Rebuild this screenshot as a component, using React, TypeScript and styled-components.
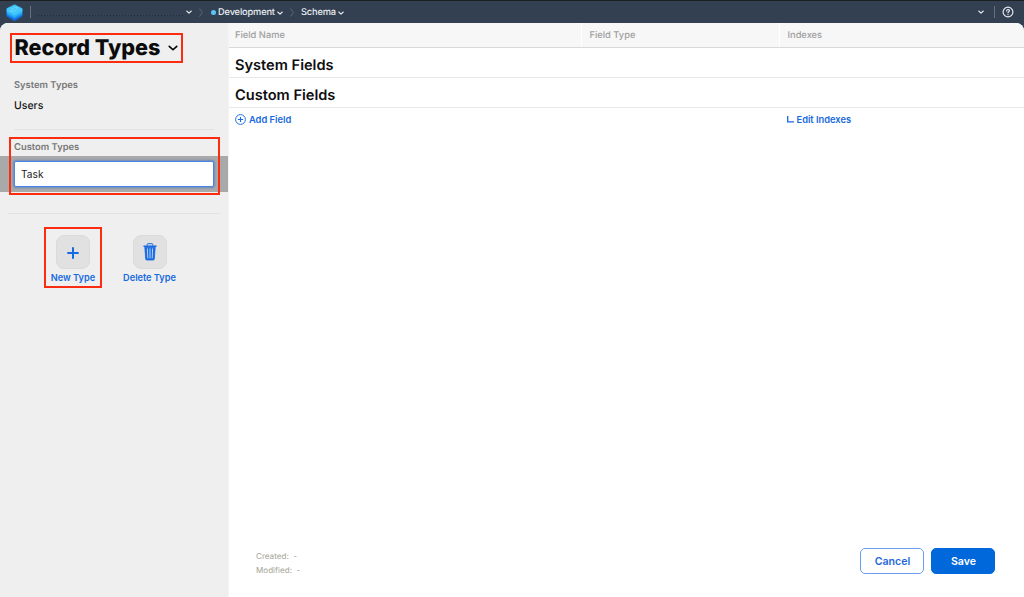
import React from "react";
import styled, { createGlobalStyle } from "styled-components";

const GlobalStyle = createGlobalStyle`
  *, *::before, *::after { box-sizing: border-box; }
  body {
    margin: 0;
    overflow: hidden;
    background: #334052;
    font-family: Inter, "Liberation Sans", sans-serif;
    -webkit-font-smoothing: antialiased;
    text-rendering: geometricPrecision;
  }
  button { font-family: inherit; }
`;

const Page = styled.div`
  display: flex;
  flex-direction: column;
  width: 1024px;
  height: 597px;
  background: #334052;
`;

const TopBar = styled.header`
  display: flex;
  align-items: center;
  flex: none;
  height: 23px;
  padding: 0 10px 0 6px;
  border-top: 1px solid #1d1e21;
  color: #e9ecf0;
`;

const Divider = styled.span<{ $left: number; $right: number }>`
  width: 1px;
  height: 12px;
  margin: 0 ${(p) => p.$right}px 0 ${(p) => p.$left}px;
  background: #667080;
`;

const HiddenName = styled.span`
  width: 145px;
  height: 1px;
  margin: 6px 4px 0 7px;
  background: repeating-linear-gradient(90deg, #222b38 0 1px, transparent 1px 3px);
`;

const Crumb = styled.span<{ $width: number }>`
  display: flex;
  align-items: center;
  justify-content: space-between;
  width: ${(p) => p.$width}px;
  padding-top: 1px;
  font-size: 9.3px;
  letter-spacing: -0.18px;
  line-height: 14px;
  font-weight: 500;
  white-space: nowrap;
`;

const StatusDot = styled.span`
  width: 5px;
  height: 5px;
  margin-right: 2px;
  border-radius: 50%;
  background: #5ac3fb;
`;

const Spacer = styled.span`
  flex: 1;
`;

const Icon = styled.svg<{ $ml?: number; $mr?: number }>`
  display: block;
  flex: none;
  margin-left: ${(p) => p.$ml ?? 0}px;
  margin-right: ${(p) => p.$mr ?? 0}px;
`;

const Workspace = styled.div`
  display: flex;
  flex: 1;
  min-height: 0;
  overflow: hidden;
  border-radius: 8px 8px 0 0;
  background: #fff;
`;

const Sidebar = styled.aside`
  flex: none;
  width: 228px;
  background: #efefef;
`;

const TitleRow = styled.div`
  position: relative;
  display: flex;
  align-items: center;
  width: 173px;
  height: 30px;
  margin: 10px 0 0 10px;
  padding: 0 0 0 4.5px;
`;

const Title = styled.h1`
  width: 153px;
  margin: 0;
  font-size: 21.6px;
  line-height: 26px;
  font-weight: 780;
  color: #0c0c0d;
  white-space: nowrap;
`;

const Highlight = styled.span`
  position: absolute;
  inset: 0;
  border: 2px solid #fb2c10;
  pointer-events: none;
`;

const SectionLabel = styled.h2`
  margin: 0;
  padding: 1px 0 0 14px;
  font-size: 9.4px;
  line-height: 12px;
  font-weight: 600;
  color: #777;
`;

const SystemSection = styled.section`
  padding-top: 15.5px;
`;

const TypeItem = styled.div`
  padding: 7.5px 0 0 14px;
  font-size: 10.5px;
  line-height: 14px;
  font-weight: 500;
  color: #151515;
`;

const Rule = styled.div<{ $top: number; $side: number }>`
  height: 1px;
  margin: ${(p) => p.$top}px ${(p) => p.$side}px 0;
  background: #e2e2e2;
`;

const CustomSection = styled.section`
  position: relative;
  height: 58px;
  margin-top: 7px;
  padding-top: 4px;
`;

const CustomHighlight = styled(Highlight)`
  left: 9px;
  right: 8px;
`;

const SelectedRow = styled.div`
  display: flex;
  align-items: center;
  height: 36px;
  margin-top: 2px;
  padding: 0 14px;
  background: #a9a9a9;
`;

const NameInput = styled.input`
  width: 200px;
  height: 26px;
  padding: 0 6px;
  border: 1px solid #4a86e2;
  border-radius: 2px;
  outline: none;
  box-shadow: 0 0 2px 1px rgba(62, 116, 199, 0.6);
  background: #fff;
  font-family: inherit;
  font-size: 10.2px;
  color: #252525;
`;

const Actions = styled.div`
  display: flex;
  gap: 18.5px;
  margin: 13px 0 0 44px;
`;

const Action = styled.button`
  position: relative;
  display: flex;
  flex-direction: column;
  align-items: center;
  width: 58px;
  height: 61px;
  padding: 8px 0 0;
  border: 0;
  background: none;
  color: #176ae0;
  font-size: 9.2px;
  line-height: 12px;
  font-weight: 600;
  white-space: nowrap;
`;

const ActionTile = styled.span`
  display: flex;
  align-items: center;
  justify-content: center;
  width: 34px;
  height: 34px;
  margin-bottom: 3px;
  border: 1px solid #dadada;
  border-radius: 8px;
  background: #e1e1e1;
`;

const Content = styled.main`
  display: flex;
  flex-direction: column;
  flex: 1;
  border-left: 1px solid #f3f3f3;
`;

const columns = "352px 198px 1fr";

const HeaderRow = styled.div`
  display: grid;
  grid-template-columns: ${columns};
  height: 25px;
  border-bottom: 1px solid #d9d9d9;
  background: #f7f7f7;
`;

const HeaderCell = styled.div`
  padding: 7px 0 0 6px;
  font-size: 9.3px;
  line-height: 12px;
  font-weight: 500;
  color: #a0a0a0;
  & + & {
    padding-left: 7.5px;
    border-left: 1px solid #fff;
  }
`;

const GroupRow = styled.h3`
  height: 30px;
  margin: 0;
  padding: 8px 0 0 6px;
  border-bottom: 1px solid #e8e8e8;
  font-size: 14.6px;
  line-height: 18px;
  font-weight: 600;
  color: #0e0e0f;
`;

const LinkRow = styled.div`
  display: grid;
  grid-template-columns: ${columns};
  padding-top: 4px;
`;

const LinkButton = styled.button<{ $column: number }>`
  display: flex;
  align-items: center;
  grid-column: ${(p) => p.$column};
  height: 14px;
  padding: 0 0 0 ${(p) => (p.$column === 1 ? 6 : 7.5)}px;
  border: 0;
  background: none;
  color: #1769e0;
  font-size: 9.3px;
  font-weight: 600;
  white-space: nowrap;
`;

const Footer = styled.footer`
  display: flex;
  align-items: flex-start;
  justify-content: space-between;
  margin-top: auto;
  height: 49px;
  padding: 0 29px 0 27px;
`;

const Meta = styled.div`
  padding-top: 2px;
  font-size: 8.1px;
  line-height: 13.5px;
  color: #a5a597;
  white-space: pre;
`;

const Buttons = styled.div`
  display: flex;
  gap: 7px;
`;

const Button = styled.button<{ $primary?: boolean }>`
  width: 64px;
  height: 26px;
  padding: 0 0 0 1px;
  border: 1px solid ${(p) => (p.$primary ? "#0068da" : "#6b9eea")};
  border-radius: 5px;
  background: ${(p) => (p.$primary ? "#0068da" : "#fff")};
  color: ${(p) => (p.$primary ? "#fff" : "#1f68dc")};
  font-size: 10.6px;
  font-weight: 600;
`;

type ChevronProps = { size?: number; stroke?: number; ml?: number; mr?: number };

const Chevron = ({ size = 6, stroke = 1.5, ml, mr }: ChevronProps) => (
  <Icon $ml={ml} $mr={mr} width={size} height={size} viewBox="0 0 8 8" fill="none"
    stroke="currentColor" strokeWidth={stroke} strokeLinecap="round" strokeLinejoin="round">
    <path d="M1 2.7 4 5.4 7 2.7" />
  </Icon>
);

const CrumbArrow = ({ ml, mr }: { ml: number; mr: number }) => (
  <Icon $ml={ml} $mr={mr} width="4" height="9" viewBox="0 0 4 9" fill="none" stroke="#667080" strokeWidth="0.8">
    <path d="M0.5 0.5 3.4 4.5 0.5 8.5" />
  </Icon>
);

const Logo = () => (
  <Icon width="17" height="17" viewBox="0 0 17 17">
    <path d="M1 5 8.5 1 16 5v7.3L8.5 16.7 1 12.3z" fill="#1267d5" stroke="#1267d5" strokeLinejoin="round" />
    <path d="M.8 5h15.4v6.3L8.5 15.2.8 11.3z" fill="#1b8bed" />
    <path d="M.8 4.8h15.4v4.6l-7.7 4-7.7-4z" fill="#2ab0f6" />
    <path d="M1 4.6 8.5.8 16 4.6v2.6L8.5 11 1 7.2z" fill="#43c6fa" stroke="#43c6fa" strokeWidth=".7" strokeLinejoin="round" />
    <path d="M5 7.2C5.2 4.6 8 3.2 11.4 3.4 11.4 6 8.6 7.6 5 7.2z" fill="none" stroke="#85e3ff" strokeWidth=".6" />
  </Icon>
);

const HelpIcon = () => (
  <Icon width="12" height="12" viewBox="0 0 12 12" fill="none" stroke="currentColor" strokeLinecap="round">
    <circle cx="6" cy="6" r="4.9" strokeWidth="1.15" />
    <path d="M4.6 4.9C4.6 3 7.5 3.1 7.4 4.8 7.3 5.8 6 5.8 6 6.8" strokeWidth="1.2" />
    <circle cx="6" cy="8.6" r=".7" fill="currentColor" stroke="none" />
  </Icon>
);

const PlusIcon = () => (
  <Icon width="12" height="14" viewBox="0 0 12 14" stroke="currentColor" strokeWidth="2">
    <path d="M6 2.3v11.4M.3 8h11.4" />
  </Icon>
);

const TrashIcon = () => (
  <Icon width="14" height="18" viewBox="0 0 14 18" fill="none" stroke="currentColor" strokeLinejoin="round">
    <path d="M4.2 2.7V1.5q0-.8.8-.8h4q.8 0 .8.8v1.2" strokeWidth="1" />
    <path d="M.5 3.2h13" strokeWidth="1.4" />
    <path d="M1.8 4.2 2.7 16q.1 1 1 1h6.6q.9 0 1-1l.9-11.8z" fill="currentColor" strokeWidth=".8" />
    <path d="M4.4 5.4 4.8 15.4M7 5.4V15.4M9.6 5.4 9.2 15.4" stroke="#d9e4f4" strokeWidth=".85" />
  </Icon>
);

const AddIcon = () => (
  <Icon $mr={3} width="11" height="11" viewBox="0 0 11 11" fill="none" stroke="currentColor">
    <circle cx="5.5" cy="5.5" r="4.9" strokeWidth=".95" />
    <path d="M5.5 2.9v5.2M2.9 5.5h5.2" strokeWidth="1.1" />
  </Icon>
);

const CornerIcon = () => (
  <Icon $mr={3} width="7" height="7" viewBox="0 0 7 7" fill="none" stroke="currentColor" strokeWidth="1.3">
    <path d="M.7 0v5.8H7" />
  </Icon>
);

export default function App() {
  return (
    <>
      <GlobalStyle />
      <Page>
        <TopBar>
          <Logo />
          <Divider $left={7} $right={0} />
          <HiddenName />
          <Chevron ml={-1} />
          <CrumbArrow ml={7} mr={8} />
          <StatusDot />
          <Crumb $width={65}>Development<Chevron /></Crumb>
          <CrumbArrow ml={7} mr={7} />
          <Crumb $width={43}>Schema<Chevron /></Crumb>
          <Spacer />
          <Chevron />
          <Divider $left={10} $right={7} />
          <HelpIcon />
        </TopBar>
        <Workspace>
          <Sidebar>
            <TitleRow>
              <Title>Record Types</Title>
              <Chevron size={10} stroke={1.3} />
              <Highlight />
            </TitleRow>
            <SystemSection>
              <SectionLabel>System Types</SectionLabel>
              <TypeItem>Users</TypeItem>
            </SystemSection>
            <Rule $top={16} $side={14} />
            <CustomSection>
              <SectionLabel>Custom Types</SectionLabel>
              <SelectedRow>
                <NameInput defaultValue="Task" aria-label="Type name" />
              </SelectedRow>
              <CustomHighlight />
            </CustomSection>
            <Rule $top={18} $side={8} />
            <Actions>
              <Action>
                <ActionTile><PlusIcon /></ActionTile>
                New Type
                <Highlight />
              </Action>
              <Action>
                <ActionTile><TrashIcon /></ActionTile>
                Delete Type
              </Action>
            </Actions>
          </Sidebar>
          <Content>
            <HeaderRow>
              <HeaderCell>Field Name</HeaderCell>
              <HeaderCell>Field Type</HeaderCell>
              <HeaderCell>Indexes</HeaderCell>
            </HeaderRow>
            <GroupRow>System Fields</GroupRow>
            <GroupRow>Custom Fields</GroupRow>
            <LinkRow>
              <LinkButton $column={1}><AddIcon />Add Field</LinkButton>
              <LinkButton $column={3}><CornerIcon />Edit Indexes</LinkButton>
            </LinkRow>
            <Footer>
              <Meta>{"Created:  -\nModified:  -"}</Meta>
              <Buttons>
                <Button>Cancel</Button>
                <Button $primary>Save</Button>
              </Buttons>
            </Footer>
          </Content>
        </Workspace>
      </Page>
    </>
  );
}
